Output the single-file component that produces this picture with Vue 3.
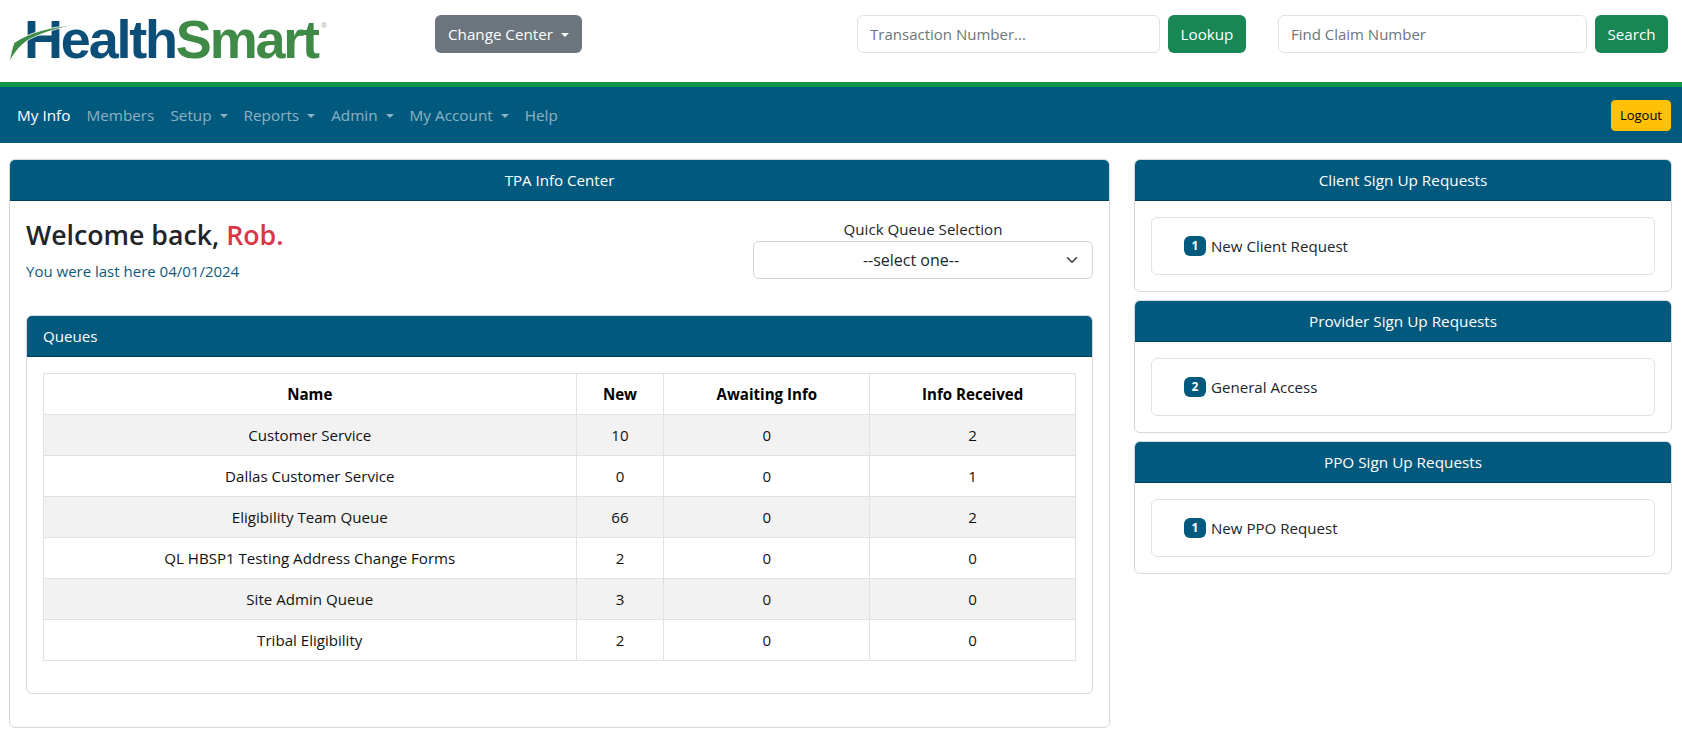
<script setup>
import { ref } from 'vue';

const navItems = [
  { label: 'My Info', active: true },
  { label: 'Members' },
  { label: 'Setup', caret: true },
  { label: 'Reports', caret: true },
  { label: 'Admin', caret: true },
  { label: 'My Account', caret: true },
  { label: 'Help' }
];

const queues = [
  { name: 'Customer Service', fresh: 10, awaiting: 0, received: 2 },
  { name: 'Dallas Customer Service', fresh: 0, awaiting: 0, received: 1 },
  { name: 'Eligibility Team Queue', fresh: 66, awaiting: 0, received: 2 },
  { name: 'QL HBSP1 Testing Address Change Forms', fresh: 2, awaiting: 0, received: 0 },
  { name: 'Site Admin Queue', fresh: 3, awaiting: 0, received: 0 },
  { name: 'Tribal Eligibility', fresh: 2, awaiting: 0, received: 0 }
];

const requests = [
  { title: 'Client Sign Up Requests', count: 1, label: 'New Client Request' },
  { title: 'Provider Sign Up Requests', count: 2, label: 'General Access' },
  { title: 'PPO Sign Up Requests', count: 1, label: 'New PPO Request' }
];

const quickQueue = ref('');
</script>

<template>
  <header class="top">
    <div class="logo">
      <span class="word-health">Health</span><span class="word-smart">Smart</span><sup class="reg">®</sup>
      <svg class="swoosh" viewBox="0 0 80 60" width="80" height="60">
        <path d="M9.300 52.300C10.500 45 12 38 14 32.700C30 22 52 16.500 74 15.300C58 18 42 23 30 29C21 34 14 43 9.300 52.300Z" fill="#3f8c46" stroke="#fff" stroke-width="0.8" />
      </svg>
    </div>
    <button class="btn btn-grey" type="button">Change Center<i class="caret"></i></button>
    <div class="lookups">
      <form class="lookup" @submit.prevent>
        <input class="field field-tx" type="text" placeholder="Transaction Number..." />
        <button class="btn btn-green" type="submit">Lookup</button>
      </form>
      <form class="lookup" @submit.prevent>
        <input class="field field-claim" type="text" placeholder="Find Claim Number" />
        <button class="btn btn-green" type="submit">Search</button>
      </form>
    </div>
  </header>

  <nav class="nav">
    <a v-for="item in navItems" :key="item.label" href="#" :class="['nav-link', { active: item.active }]">
      {{ item.label }}<i v-if="item.caret" class="caret"></i>
    </a>
    <button class="logout" type="button">Logout</button>
  </nav>

  <main class="page">
    <section class="card">
      <div class="card-head">TPA Info Center</div>
      <div class="card-body">
        <div class="welcome-row">
          <div class="welcome">
            <h3>Welcome back, <span class="name">Rob.</span></h3>
            <p>You were last here 04/01/2024</p>
          </div>
          <div class="quick">
            <label for="quick-queue">Quick Queue Selection</label>
            <select id="quick-queue" v-model="quickQueue">
              <option value="">--select one--</option>
            </select>
          </div>
        </div>

        <section class="card queues">
          <div class="card-head left">Queues</div>
          <div class="card-body">
            <table>
              <colgroup>
                <col class="col-name" />
                <col class="col-new" />
                <col class="col-num" />
                <col class="col-num" />
              </colgroup>
              <thead>
                <tr>
                  <th>Name</th>
                  <th>New</th>
                  <th>Awaiting Info</th>
                  <th>Info Received</th>
                </tr>
              </thead>
              <tbody>
                <tr v-for="q in queues" :key="q.name">
                  <td>{{ q.name }}</td>
                  <td>{{ q.fresh }}</td>
                  <td>{{ q.awaiting }}</td>
                  <td>{{ q.received }}</td>
                </tr>
              </tbody>
            </table>
          </div>
        </section>
      </div>
    </section>

    <aside class="side">
      <section v-for="r in requests" :key="r.title" class="card">
        <div class="card-head">{{ r.title }}</div>
        <div class="card-body">
          <div class="request"><span class="badge">{{ r.count }}</span>{{ r.label }}</div>
        </div>
      </section>
    </aside>
  </main>
</template>

<style scoped>
* {
  box-sizing: border-box;
}

.top {
  display: flex;
  align-items: flex-start;
  height: 82px;
  padding: 15px 14px 0 9px;
  background: #fff;
}

.logo {
  position: relative;
  width: 426px;
  height: 50px;
  padding-left: 15px;
  font-family: "Liberation Sans", Arial, sans-serif;
  font-size: 54px;
  font-weight: 700;
  line-height: 48px;
  letter-spacing: -2.2px;
  white-space: nowrap;
}

.word-health {
  color: #0b4f79;
}

.word-smart {
  color: #3f8a47;
}

.reg {
  position: absolute;
  left: 312px;
  top: 7px;
  font-size: 8px;
  font-weight: 400;
  line-height: 8px;
  letter-spacing: 0;
  color: #9aa0a0;
}

.swoosh {
  position: absolute;
  left: -9px;
  top: -5px;
}

.btn {
  height: 38px;
  padding: 0 12px;
  border: 1px solid transparent;
  border-radius: 6px;
  color: #fff;
  font-size: 15.2px;
  line-height: 24px;
  white-space: nowrap;
  cursor: pointer;
}

.btn-grey {
  background: #6c757d;
}

.btn-green {
  padding: 0 11.5px;
  background: #198754;
}

.caret {
  display: inline-block;
  margin-left: 8px;
  vertical-align: 3px;
  border-top: 4.8px solid currentColor;
  border-left: 4.8px solid transparent;
  border-right: 4.8px solid transparent;
}

.lookups {
  display: flex;
  gap: 32px;
  margin-left: auto;
}

.lookup {
  display: flex;
  gap: 8px;
}

.field {
  height: 38px;
  padding: 0 12px;
  border: 1px solid #dee2e6;
  border-radius: 6px;
  color: #212529;
  font-size: 15px;
  outline: none;
}

.field::placeholder {
  color: #6c757d;
  opacity: 1;
}

.field-tx {
  width: 303px;
}

.field-claim {
  width: 309px;
}

.nav {
  display: flex;
  align-items: center;
  height: 61px;
  padding: 0 11px 0 9px;
  border-top: 5px solid #0b9444;
  background: #02597e;
}

.nav-link {
  padding: 8px;
  color: rgba(255, 255, 255, 0.55);
  font-size: 15.3px;
  line-height: 24px;
  text-decoration: none;
  white-space: nowrap;
}

.nav-link.active {
  color: #fff;
}

.logout {
  height: 31px;
  margin-left: auto;
  padding: 0 8px;
  border: 1px solid #ffc107;
  border-radius: 4px;
  background: #ffc107;
  color: #000;
  font-size: 13px;
  cursor: pointer;
}

.page {
  display: grid;
  grid-template-columns: 1101fr 538fr;
  column-gap: 24px;
  align-items: start;
  padding: 16px 10px 11px 9px;
  color: #212529;
  font-size: 15.1px;
  line-height: 24px;
}

.card {
  border: 1px solid #d6d8da;
  border-radius: 6px;
  background: #fff;
}

.card-head {
  height: 41px;
  padding: 8px 16px;
  border-bottom: 1px solid #01415d;
  border-radius: 5px 5px 0 0;
  background: #02597e;
  color: #fff;
  text-align: center;
}

.side .card-head {
  font-size: 15.3px;
  line-height: 25px;
}

.card-head.left {
  text-align: left;
}

.card-body {
  padding: 16px;
}

.welcome-row {
  display: flex;
  justify-content: space-between;
  height: 62px;
}

.welcome h3 {
  margin: 1px 0 0;
  color: #212529;
  font-size: 26.7px;
  font-weight: 600;
  line-height: 34px;
}

.welcome .name {
  color: #dc3545;
}

.welcome p {
  margin: 9px 0 0;
  color: #0d5a7c;
  font-size: 15px;
  line-height: 21px;
}

.quick {
  display: flex;
  flex-direction: column;
  width: 340px;
  text-align: center;
}

.quick select {
  height: 38px;
  padding: 0 36px 0 12px;
  border: 1px solid #ced4da;
  border-radius: 6px;
  appearance: none;
  background: #fff url("data:image/svg+xml,%3csvg xmlns='http://www.w3.org/2000/svg' viewBox='0 0 16 16'%3e%3cpath fill='none' stroke='%23343a40' stroke-linecap='round' stroke-linejoin='round' stroke-width='2' d='m2 5 6 6 6-6'/%3e%3c/svg%3e") no-repeat right 12px center / 16px 12px;
  color: #212529;
  font-size: 16px;
  text-align: center;
  outline: none;
}

.queues {
  margin: 36px 0 17px;
}

table {
  width: 100%;
  margin-bottom: 16px;
  border-collapse: collapse;
  table-layout: fixed;
  color: #111;
}

.col-name {
  width: 51.6%;
}

.col-new {
  width: 8.52%;
}

.col-num {
  width: 19.94%;
}

th,
td {
  height: 41px;
  padding: 8px;
  border: 1px solid #dee2e6;
  text-align: center;
}

th {
  color: #000;
  font-weight: 700;
}

tbody tr:nth-child(odd) {
  background: #f2f2f2;
}

.side {
  display: flex;
  flex-direction: column;
  gap: 8px;
}

.request {
  display: flex;
  align-items: center;
  height: 58px;
  padding: 0 32px;
  border: 1px solid #dee2e6;
  border-radius: 6px;
}

.badge {
  width: 22px;
  height: 20px;
  margin-right: 5px;
  border-radius: 6px;
  background: #02597e;
  color: #fff;
  font-size: 12px;
  font-weight: 700;
  line-height: 20px;
  text-align: center;
}
</style>

<style>
body {
  background: #fff;
  font-family: "Open Sans", "Noto Sans", sans-serif;
}

button,
input,
select {
  font-family: "Open Sans", "Noto Sans", sans-serif;
}
</style>
